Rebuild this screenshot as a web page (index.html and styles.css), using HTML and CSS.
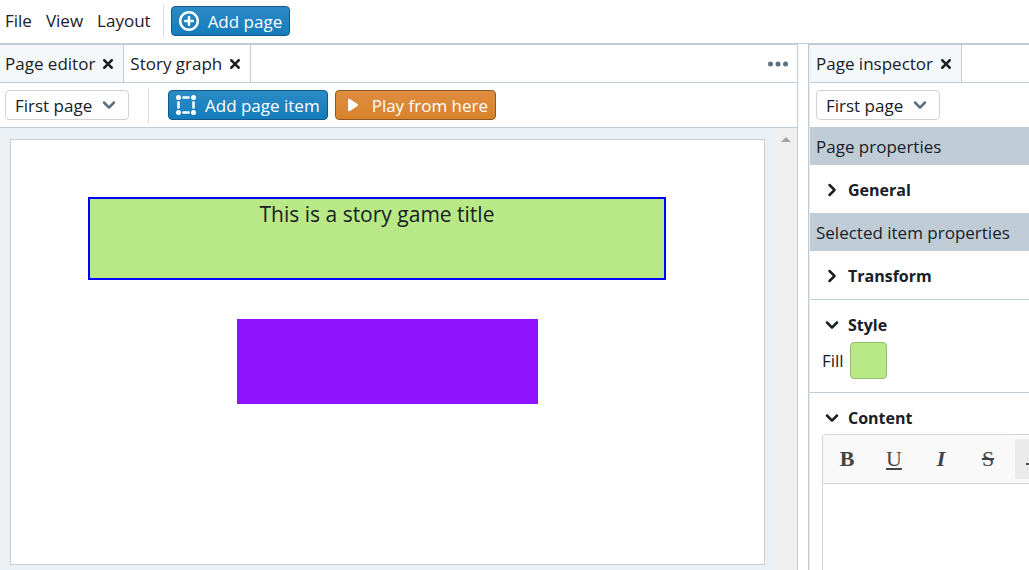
FILE: index.html
```html
<!DOCTYPE html>
<html lang="en">
<head>
<meta charset="utf-8">
<meta name="viewport" content="width=device-width, initial-scale=1">
<title>Story editor</title>
<link rel="stylesheet" href="styles.css">
</head>
<body>
<svg class="symbols" aria-hidden="true">
  <symbol id="add" viewBox="0 0 16 16"><path d="M11 7H9V5c0-.55-.45-1-1-1s-1 .45-1 1v2H5c-.55 0-1 .45-1 1s.45 1 1 1h2v2c0 .55.45 1 1 1s1-.45 1-1V9h2c.55 0 1-.45 1-1s-.45-1-1-1zM8 0C3.58 0 0 3.58 0 8s3.58 8 8 8 8-3.58 8-8-3.58-8-8-8zm0 14c-3.31 0-6-2.69-6-6s2.69-6 6-6 6 2.690 6 6-2.690 6-6 6z"/></symbol>
  <symbol id="cross" viewBox="0 0 16 16"><path d="M9.41 8l2.290-2.290c.19-.18.3-.43.3-.71a1.003 1.003 0 00-1.710-.71L8 6.590l-2.290-2.300a1.003 1.003 0 00-1.420 1.420L6.590 8 4.300 10.290c-.19.18-.3.43-.3.71a1.003 1.003 0 001.710.71L8 9.410l2.290 2.290c.18.19.43.3.71.3a1.003 1.003 0 00.71-1.710L9.410 8z"/></symbol>
  <symbol id="chevron-down" viewBox="0 0 16 16"><path d="M12 5c-.28 0-.53.11-.71.29L8 8.590l-3.290-3.300a1.003 1.003 0 00-1.420 1.420l4 4c.18.18.43.29.71.29s.53-.11.71-.29l4-4A1.003 1.003 0 0012 5z"/></symbol>
  <symbol id="chevron-right" viewBox="0 0 16 16"><path d="M10.710 7.290l-4-4a1.003 1.003 0 00-1.420 1.420L8.590 8 5.300 11.290c-.19.18-.3.43-.3.71a1.003 1.003 0 001.710.71l4-4c.18-.18.29-.43.29-.71s-.11-.53-.29-.71z"/></symbol>
  <symbol id="play" viewBox="0 0 16 16"><path d="M12 8c0-.35-.19-.64-.46-.82l.01-.02-6-4-.01.02A.969.969 0 005 3c-.55 0-1 .45-1 1v8c0 .55.45 1 1 1 .21 0 .39-.08.54-.18l.01.02 6-4-.01-.02c.27-.18.46-.47.46-.82z"/></symbol>
  <symbol id="more" viewBox="0 0 16 16"><circle cx="2" cy="8" r="2"/><circle cx="8" cy="8" r="2"/><circle cx="14" cy="8" r="2"/></symbol>
  <symbol id="group" viewBox="0 0 16 16"><circle cx="2" cy="2" r="2"/><circle cx="14" cy="2" r="2"/><circle cx="2" cy="14" r="2"/><circle cx="14" cy="14" r="2"/><rect x="5" y="1" width="6" height="2" rx=".8"/><rect x="5" y="13" width="6" height="2" rx=".8"/><rect x="1" y="5" width="2" height="6" rx=".8"/><rect x="13" y="5" width="2" height="6" rx=".8"/></symbol>
</svg>

<header class="menubar">
  <nav class="menus">
    <button class="menu" type="button">File</button>
    <button class="menu" type="button">View</button>
    <button class="menu" type="button">Layout</button>
  </nav>
  <span class="divider"></span>
  <button class="button primary" type="button"><svg class="icon"><use href="#add"/></svg><span class="label">Add page</span></button>
</header>

<main class="workspace">
  <section class="panel editor">
    <div class="tabs">
      <div class="tab active"><button class="tab-name" type="button">Page editor</button><button class="close" type="button" aria-label="Close Page editor"><svg class="icon"><use href="#cross"/></svg></button></div>
      <div class="tab"><button class="tab-name" type="button">Story graph</button><button class="close" type="button" aria-label="Close Story graph"><svg class="icon"><use href="#cross"/></svg></button></div>
      <button class="more" type="button" aria-label="More"><svg class="icon"><use href="#more"/></svg></button>
    </div>
    <div class="toolbar">
      <div class="picker"><select aria-label="Page"><option>First page</option></select><svg class="icon picker-arrow"><use href="#chevron-down"/></svg></div>
      <span class="divider spaced"></span>
      <div class="actions">
        <button class="button primary" type="button"><svg class="icon"><use href="#group"/></svg><span class="label">Add page item</span></button>
        <button class="button warning" type="button"><svg class="icon"><use href="#play"/></svg><span class="label">Play from here</span></button>
      </div>
    </div>
    <div class="stage">
      <div class="page">
        <div class="item title-item">This is a story game title</div>
        <div class="item box-item"></div>
      </div>
      <div class="scrollbar"><span class="scroll-up"></span></div>
    </div>
  </section>

  <aside class="panel inspector">
    <div class="tabs">
      <div class="tab active"><button class="tab-name" type="button">Page inspector</button><button class="close" type="button" aria-label="Close Page inspector"><svg class="icon"><use href="#cross"/></svg></button></div>
    </div>
    <div class="toolbar">
      <div class="picker"><select aria-label="Inspected page"><option>First page</option></select><svg class="icon picker-arrow"><use href="#chevron-down"/></svg></div>
    </div>
    <h2 class="band">Page properties</h2>
    <section class="group"><button class="group-head" type="button"><svg class="icon"><use href="#chevron-right"/></svg>General</button></section>
    <h2 class="band">Selected item properties</h2>
    <section class="group"><button class="group-head" type="button"><svg class="icon"><use href="#chevron-right"/></svg>Transform</button></section>
    <section class="group ruled">
      <button class="group-head" type="button"><svg class="icon"><use href="#chevron-down"/></svg>Style</button>
      <div class="field"><label for="fill">Fill</label><button class="swatch" id="fill" type="button"></button></div>
    </section>
    <section class="group ruled content">
      <button class="group-head" type="button"><svg class="icon"><use href="#chevron-down"/></svg>Content</button>
      <div class="rich">
        <div class="rich-tools">
          <button class="tool bold" type="button">B</button>
          <button class="tool underline" type="button">U</button>
          <button class="tool italic" type="button">I</button>
          <button class="tool strike" type="button">S</button>
          <button class="tool selected" type="button" aria-label="Align"><svg class="align" viewBox="0 0 18 18"><path d="M4 4h10M4 9h10M0 14h18"/></svg></button>
        </div>
        <textarea class="rich-text" aria-label="Content"></textarea>
      </div>
    </section>
  </aside>
</main>
</body>
</html>
```
FILE: styles.css
```css
* { box-sizing: border-box; }

body {
  margin: 0;
  height: 100vh;
  display: flex;
  flex-direction: column;
  overflow: hidden;
  background: #fff;
  color: #182026;
  font: 17px/24px "Open Sans", "Noto Sans", sans-serif;
}

button, select, textarea {
  margin: 0;
  padding: 0;
  border: 0;
  background: none;
  color: inherit;
  font: inherit;
}

.symbols { position: absolute; width: 0; height: 0; }
.icon { width: 20px; height: 20px; flex: none; fill: currentColor; }

.menubar {
  flex: none;
  display: flex;
  align-items: center;
  height: 44px;
  padding: 0 5px 1px;
  border-bottom: 1px solid #bfccd6;
}
.menus { display: flex; gap: 14px; }
.divider { width: 1px; height: 32px; margin: 0 7px 0 12px; background: #d8dcdf; }

.button {
  display: flex;
  align-items: center;
  gap: 9px;
  height: 30px;
  padding: 0 7px;
  border: 1px solid;
  border-radius: 4px;
  color: #fff;
  white-space: nowrap;
}
.label { padding-top: 1px; }
.primary { border-color: #10598a; background: linear-gradient(#2b8bc5, #147cbc); }
.warning { border-color: #8f5a22; background: linear-gradient(#de8d3f, #d9822b); }

.workspace {
  flex: 1;
  min-height: 0;
  display: grid;
  grid-template-columns: minmax(0, 798fr) minmax(0, 221fr);
  gap: 10px;
}
.panel {
  min-width: 0;
  min-height: 0;
  display: flex;
  flex-direction: column;
  border-top: 1px solid #bfccd6;
  overflow: hidden;
}
.editor { border-right: 1px solid #bfccd6; }
.inspector { border-left: 1px solid #bfccd6; box-shadow: inset 1px 0 #e8eef2; padding-left: 1px; }

.tabs { flex: none; display: flex; height: 38px; border-bottom: 1px solid #bfccd6; }
.tab {
  display: flex;
  align-items: center;
  gap: 3px;
  padding: 0 5px 0 6px;
  border-right: 1px solid #bfccd6;
  white-space: nowrap;
}
.editor .tab:first-child { padding-left: 5px; }
.active { background: #f5f8fa; }
.close { display: flex; }
.more { display: flex; align-items: center; margin-left: auto; padding: 0 9px; color: #5c7080; }

.toolbar { flex: none; display: flex; align-items: center; height: 44px; padding: 0 6px; }
.editor .toolbar { height: 45px; padding: 0 5px; border-bottom: 1px solid #bfccd6; }
.spaced { height: 35px; margin: 0 19px; }
.actions { display: flex; gap: 7px; }
.picker { position: relative; width: 124px; height: 30px; }
.picker select {
  width: 100%;
  height: 100%;
  padding: 1px 30px 0 9px;
  border: 1px solid #d0d3d6;
  border-radius: 4px;
  appearance: none;
}
.picker-arrow { position: absolute; top: 5px; right: 10px; color: #5c7080; pointer-events: none; }

.stage { flex: 1; min-height: 0; display: flex; gap: 11px; background: #ebf0f4; }
.page {
  position: relative;
  flex: 1;
  margin: 11px 0 5px 10px;
  border: 1px solid #c8cdd1;
  background: #fff;
  overflow: hidden;
}
.item { position: absolute; }
.title-item {
  left: 77px;
  top: 57px;
  width: 578px;
  height: 83px;
  border: 2px solid #0000ff;
  background: #b8e986;
  text-align: center;
  font-size: 21px;
  line-height: 30px;
}
.box-item { left: 226px; top: 179px; width: 301px; height: 85px; background: #9013fe; }
.scrollbar { width: 21px; padding-top: 9px; background: #f0f0f0; }
.scroll-up {
  display: block;
  width: 10px;
  margin-left: 5px;
  border: 5px solid transparent;
  border-top: 0;
  border-bottom-color: #a3a3a3;
}

.band {
  flex: none;
  margin: 0;
  padding: 8px 6px 6px;
  background: #bfccd6;
  font-size: inherit;
  font-weight: 400;
  white-space: nowrap;
}
.group { flex: none; padding: 13px 0 11px 12px; }
.ruled { padding-bottom: 13px; border-top: 1px solid #bfccd6; }
.group-head { display: flex; align-items: center; gap: 6px; font-size: 16px; font-weight: 700; }
.field { display: flex; align-items: center; gap: 6px; padding-top: 5px; }
.swatch { width: 37px; height: 37px; border: 1px solid #94bd6c; border-radius: 4px; background: #b8e986; }

.content { flex: 1; min-height: 0; display: flex; flex-direction: column; gap: 4px; padding-bottom: 0; }
.rich {
  flex: 1;
  display: flex;
  flex-direction: column;
  border: 1px solid #d5d5d5;
  border-right: 0;
  border-bottom: 0;
  border-radius: 4px 0 0 0;
  overflow: hidden;
}
.rich-tools { display: flex; gap: 7px; padding: 4px; border-bottom: 1px solid #d5d5d5; background: #f9f9f9; }
.tool { flex: none; width: 40px; height: 40px; border-radius: 3px; color: #444; font: 22px/40px "Liberation Serif", serif; }
.bold { font-weight: 700; }
.underline { text-decoration: underline; text-underline-offset: 2px; }
.italic { font-style: italic; font-weight: 700; }
.strike { text-decoration: line-through; }
.selected { display: grid; place-items: center; background: #ebebeb; }
.align { width: 18px; height: 18px; fill: none; stroke: #444; stroke-width: 2; }
.rich-text { flex: 1; resize: none; outline: 0; }
```
